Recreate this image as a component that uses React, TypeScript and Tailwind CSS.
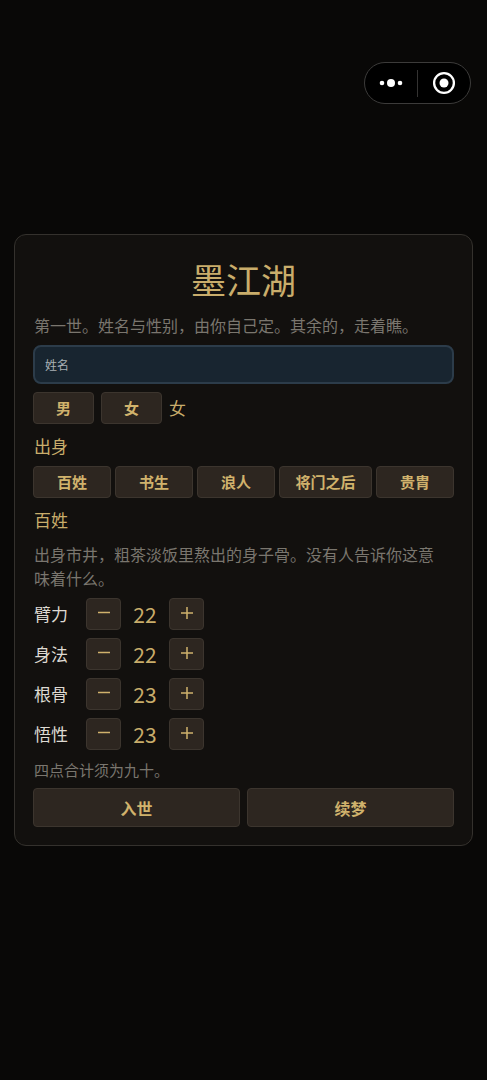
import React, { useState } from 'react';

const BUTTON =
  'flex items-center justify-center rounded border border-[#3c352e] bg-[#2d2620] text-[#d0b26c]';

const ORIGINS = [
  { name: '百姓', desc: '出身市井，粗茶淡饭里熬出的身子骨。没有人告诉你这意味着什么。' },
  { name: '书生', desc: '' },
  { name: '浪人', desc: '' },
  { name: '将门之后', desc: '' },
  { name: '贵胄', desc: '' },
];

const STATS = ['臂力', '身法', '根骨', '悟性'];

const Capsule = () => (
  <div className="absolute top-[62px] right-4 flex h-[42px] w-[107px] items-center rounded-full border border-[#3c3b3a] bg-black text-white">
    <button type="button" aria-label="更多" className="flex h-full flex-1 items-center justify-center">
      <svg width="24" height="10" viewBox="0 0 24 10" fill="currentColor">
        <circle cx="3" cy="5" r="2.3" />
        <circle cx="12" cy="5" r="4" />
        <circle cx="21" cy="5" r="2.3" />
      </svg>
    </button>
    <div className="h-[27px] w-px bg-[#343332]" />
    <button type="button" aria-label="关闭" className="flex h-full flex-1 items-center justify-center">
      <svg width="24" height="24" viewBox="0 0 24 24">
        <circle cx="12" cy="12" r="9.9" fill="none" stroke="currentColor" strokeWidth="2.3" />
        <circle cx="12" cy="12" r="4.5" fill="currentColor" />
      </svg>
    </button>
  </div>
);

const App = () => {
  const [name, setName] = useState('');
  const [gender, setGender] = useState('女');
  const [origin, setOrigin] = useState(0);
  const [points, setPoints] = useState([22, 22, 23, 23]);

  const change = (index: number, delta: number) => {
    setPoints(prev => prev.map((p, i) => (i === index ? p + delta : p)));
  };

  return (
    <div className="relative flex min-h-screen flex-col justify-center bg-[#090807] px-[14px] font-['Noto_Sans_CJK_SC',sans-serif] text-[#c9ad6b]">
      <Capsule />

      <main className="rounded-xl border border-[#34312d] bg-[#12100e] p-[18px]">
        <h1 className="mt-1 text-center text-[35px] leading-[44px]">墨江湖</h1>
        <p className="mt-3 px-px text-base leading-6 text-[#7a766e]">
          第一世。姓名与性别，由你自己定。其余的，走着瞧。
        </p>

        <input
          type="text"
          aria-label="姓名"
          placeholder="姓名"
          value={name}
          onChange={e => setName(e.target.value)}
          className="mt-2 block h-[39px] w-full rounded-lg border-2 border-[#2c3c4a] bg-[#182530] px-[10px] text-xs text-[#c3c8cc] placeholder:text-[#a9b0b5] focus:outline-none"
        />

        <div className="mt-2 flex items-center gap-[7px]">
          {['男', '女'].map(g => (
            <button
              key={g}
              type="button"
              onClick={() => setGender(g)}
              className={`${BUTTON} h-8 w-[61px] text-[15px] font-bold`}
            >
              {g}
            </button>
          ))}
          <span className="text-[17px] leading-6">{gender}</span>
        </div>

        <h2 className="mt-[10px] px-px text-[17px] leading-6">出身</h2>
        <div className="mt-2 grid grid-cols-[78fr_78fr_78fr_93fr_78fr] gap-1">
          {ORIGINS.map((o, i) => (
            <button
              key={o.name}
              type="button"
              onClick={() => setOrigin(i)}
              className={`${BUTTON} h-8 text-[15px] font-bold`}
            >
              {o.name}
            </button>
          ))}
        </div>

        <h2 className="mt-[10px] px-px text-[17px] leading-6">{ORIGINS[origin].name}</h2>
        <p className="mt-[10px] pr-2 pl-px text-base leading-6 text-[#7a766e]">{ORIGINS[origin].desc}</p>

        <div className="mt-2 flex flex-col gap-2">
          {STATS.map((stat, i) => (
            <div key={stat} className="flex items-center">
              <span className="w-[53px] px-px text-[17px] leading-6 text-[#dedad2]">{stat}</span>
              <button
                type="button"
                aria-label={`${stat}减一`}
                onClick={() => change(i, -1)}
                className={`${BUTTON} h-8 w-[35px]`}
              >
                <svg width="14" height="14" viewBox="0 0 14 14" stroke="currentColor" strokeWidth="1.5">
                  <path d="M1 5.5h12" />
                </svg>
              </button>
              <span className="w-12 text-center text-[21px] leading-8">{points[i]}</span>
              <button
                type="button"
                aria-label={`${stat}加一`}
                onClick={() => change(i, 1)}
                className={`${BUTTON} h-8 w-[35px]`}
              >
                <svg width="14" height="14" viewBox="0 0 14 14" stroke="currentColor" strokeWidth="1.5">
                  <path d="M1 6h12M7 0v12" />
                </svg>
              </button>
            </div>
          ))}
        </div>

        <p className="mt-2 px-px text-[15px] leading-6 text-[#7a766e]">四点合计须为九十。</p>
        <div className="mt-[6px] grid grid-cols-2 gap-[7px]">
          <button type="button" className={`${BUTTON} h-[39px] text-base font-bold`}>
            入世
          </button>
          <button type="button" className={`${BUTTON} h-[39px] text-base font-bold`}>
            续梦
          </button>
        </div>
      </main>
    </div>
  );
};

export default App;
